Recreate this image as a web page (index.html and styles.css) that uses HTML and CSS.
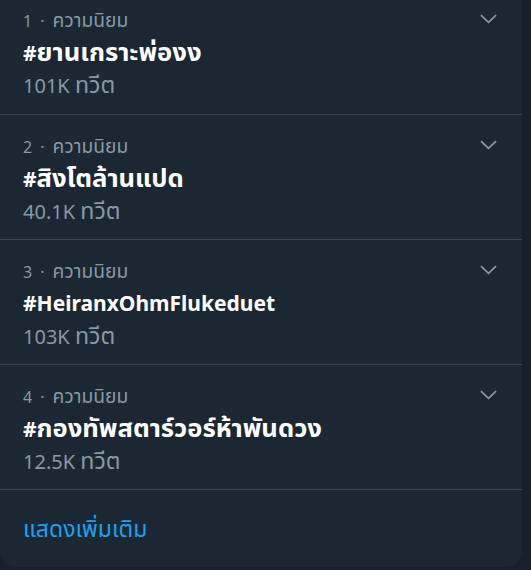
FILE: index.html
```html
<!DOCTYPE html>
<html lang="th">
<head>
    <meta charset="UTF-8">
    <meta name="viewport" content="width=device-width, initial-scale=1.0">
    <title>เทรนด์</title>
    <link rel="stylesheet" href="styles.css">
</head>
<body>
    <section class="trends">
        <!-- Trend rows -->
        <div class="trend trend-first">
            <div class="trend-text">
                <div class="trend-meta">1<span class="dot">·</span><span class="th">ความนิยม</span></div>
                <div class="trend-title">#<span class="th">ยานเกราะพ่องง</span></div>
                <div class="trend-count">101K <span class="th">ทวีต</span></div>
            </div>
            <svg class="trend-caret" viewBox="0 0 18 10"><path d="M1 1l8 7.5L17 1"/></svg>
        </div>
        <div class="trend">
            <div class="trend-text">
                <div class="trend-meta">2<span class="dot">·</span><span class="th">ความนิยม</span></div>
                <div class="trend-title">#<span class="th">สิงโตล้านแปด</span></div>
                <div class="trend-count">40.1K <span class="th">ทวีต</span></div>
            </div>
            <svg class="trend-caret" viewBox="0 0 18 10"><path d="M1 1l8 7.5L17 1"/></svg>
        </div>
        <div class="trend">
            <div class="trend-text">
                <div class="trend-meta">3<span class="dot">·</span><span class="th">ความนิยม</span></div>
                <div class="trend-title">#HeiranxOhmFlukeduet</div>
                <div class="trend-count">103K <span class="th">ทวีต</span></div>
            </div>
            <svg class="trend-caret" viewBox="0 0 18 10"><path d="M1 1l8 7.5L17 1"/></svg>
        </div>
        <div class="trend">
            <div class="trend-text">
                <div class="trend-meta">4<span class="dot">·</span><span class="th">ความนิยม</span></div>
                <div class="trend-title">#<span class="th">กองทัพสตาร์วอร์ห้าพันดวง</span></div>
                <div class="trend-count">12.5K <span class="th">ทวีต</span></div>
            </div>
            <svg class="trend-caret" viewBox="0 0 18 10"><path d="M1 1l8 7.5L17 1"/></svg>
        </div>

        <a class="show-more" href="#">แสดงเพิ่มเติม</a>
    </section>
</body>
</html>
```

FILE: styles.css
```css
/* Global settings */
:root {
    --color-page: #17212c;
    --color-card: #1b2733;
    --color-border: #38444d;
    --color-muted: #8899a6;
    --color-link: #1da1f2;
    --font-default: "Noto Sans", "Noto Sans Thai", "Open Sans", sans-serif;
}

body {
    margin: 0;
    background-color: var(--color-page);
    font-family: var(--font-default);
    color: #fff;
}

/* Thai glyphs run small in the fallback font, scale them up */
.th {
    font-size: 1.2em;
}

/* Trends card */
.trends {
    width: 522px;
    height: 567px;
    background-color: var(--color-card);
    border-radius: 0 0 16px 16px;
    overflow: hidden;
}

.trend {
    display: flex;
    justify-content: space-between;
    align-items: flex-start;
    height: 125px;
    padding: 15px 25px 0 23px;
    box-sizing: border-box;
    border-bottom: 1px solid var(--color-border);
}

.trend-first {
    height: 115px;
    padding-top: 4px;
}

.trend-meta {
    height: 32px;
    line-height: 32px;
    font-size: 16px;
    color: var(--color-muted);
}

.trend-meta .dot {
    margin: 0 8px;
}

.trend-title {
    height: 32px;
    line-height: 32px;
    font-size: 21px;
    font-weight: bold;
}

.trend-title .th {
    font-size: 1.22em;
}

.trend-count {
    height: 32px;
    line-height: 32px;
    font-size: 20px;
    color: var(--color-muted);
}

.trend-count .th {
    font-size: 1.16em;
}

.trend-caret {
    width: 17px;
    height: 10px;
    margin-top: 10px;
    fill: none;
    stroke: var(--color-muted);
    stroke-width: 1.8;
}

.show-more {
    display: block;
    padding: 22px 23px;
    line-height: 32px;
    font-size: 23px;
    color: var(--color-link);
    text-decoration: none;
}
```
